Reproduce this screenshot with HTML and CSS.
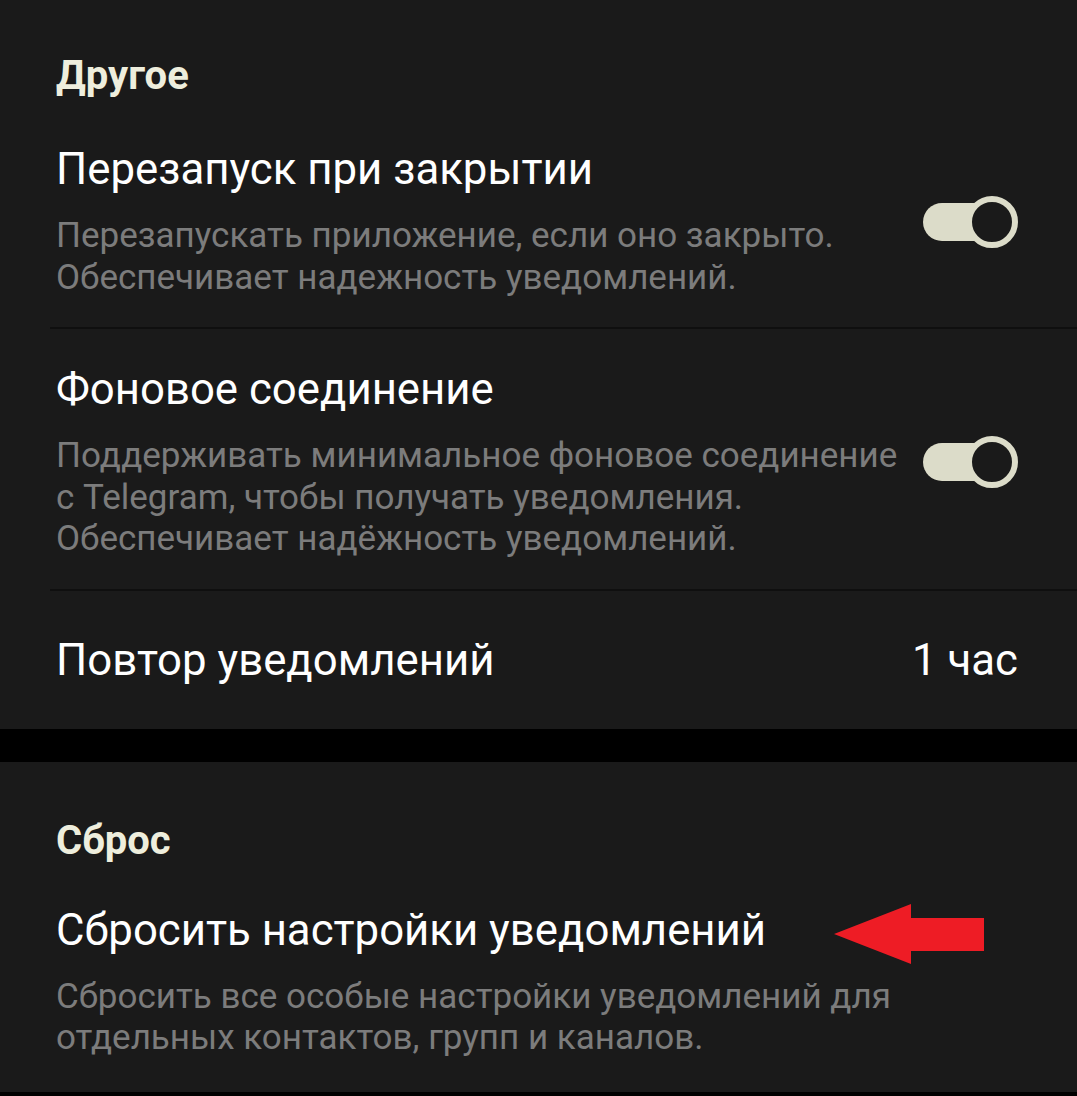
FILE: index.html
```html
<!DOCTYPE html>
<html lang="ru">
<head>
<meta charset="utf-8">
<title>Уведомления</title>
<link rel="stylesheet" href="styles.css">
</head>
<body>
<div class="page">
  <section class="section section-first">
    <h2 class="section-header">Другое</h2>
    <div class="row">
      <div class="row-text">
        <div class="row-title">Перезапуск при закрытии</div>
        <div class="row-sub">Перезапускать приложение, если оно закрыто.<br>Обеспечивает надежность уведомлений.</div>
      </div>
      <div class="toggle"><span class="toggle-track"></span><span class="toggle-knob"></span></div>
    </div>
    <div class="row">
      <div class="row-text">
        <div class="row-title">Фоновое соединение</div>
        <div class="row-sub">Поддерживать минимальное фоновое соединение<br>с Telegram, чтобы получать уведомления.<br>Обеспечивает надёжность уведомлений.</div>
      </div>
      <div class="toggle"><span class="toggle-track"></span><span class="toggle-knob"></span></div>
    </div>
    <div class="row row-single row-last">
      <div class="row-title">Повтор уведомлений</div>
      <div class="row-value">1 час</div>
    </div>
  </section>
  <section class="section section-second">
    <h2 class="section-header">Сброс</h2>
    <div class="row row-last row-reset">
      <div class="row-text">
        <div class="row-title">Сбросить настройки уведомлений</div>
        <div class="row-sub">Сбросить все особые настройки уведомлений для<br>отдельных контактов, групп и каналов.</div>
      </div>
    </div>
  </section>
  <svg class="arrow" width="154" height="64" viewBox="0 0 154 64" aria-hidden="true">
    <polygon points="2,32 79,2 79,16 152,16 152,49 79,49 79,62" fill="#ee1c25"/>
  </svg>
</div>
</body>
</html>
```

FILE: styles.css
```css
* { box-sizing: border-box; }
html, body { margin: 0; padding: 0; }
body {
  background: #000;
  font-family: Roboto, "Noto Sans", "Liberation Sans", sans-serif;
  width: 1077px;
  height: 1096px;
  overflow: hidden;
}
.page { position: relative; }
.section {
  background: #1a1a1a;
}
.section + .section { margin-top: 33px; }
.section-header {
  margin: 0;
  padding: 52px 0 9px 56px;
  font-size: 40px;
  line-height: 48px;
  font-weight: 700;
  color: #eeeedd;
}
.section-second .section-header { padding-top: 55px; padding-bottom: 5px; }
.row {
  display: flex;
  align-items: center;
  margin-left: 50px;
  padding: 36px 59px 29px 6px;
  border-bottom: 2px solid #0f0f0f;
}
.row-last { border-bottom: 0; }
.row-text { flex: 1; }
.row-title {
  font-size: 43.75px;
  line-height: 48px;
  color: #ffffff;
}
.row-sub {
  margin-top: 22px;
  font-size: 35px;
  line-height: 41.5px;
  color: #7c7c7c;
}
.row-single {
  height: 138px;
  padding-top: 0;
  padding-bottom: 0;
  justify-content: space-between;
}
.row-value {
  font-size: 43.75px;
  line-height: 48px;
  color: #ffffff;
}
.row-reset { padding-bottom: 33px; }
.toggle {
  position: relative;
  width: 95px;
  height: 52px;
  flex: none;
  margin-left: 12px;
}
.toggle-track {
  position: absolute;
  left: 0;
  top: 7px;
  width: 80px;
  height: 38px;
  border-radius: 19px;
  background: #dcdcc9;
}
.toggle-knob {
  position: absolute;
  right: 0;
  top: 0;
  width: 52px;
  height: 52px;
  border-radius: 50%;
  background: #1a1a1a;
  border: 6px solid #dcdcc9;
}
.arrow {
  position: absolute;
  left: 832px;
  top: 902px;
}
```
